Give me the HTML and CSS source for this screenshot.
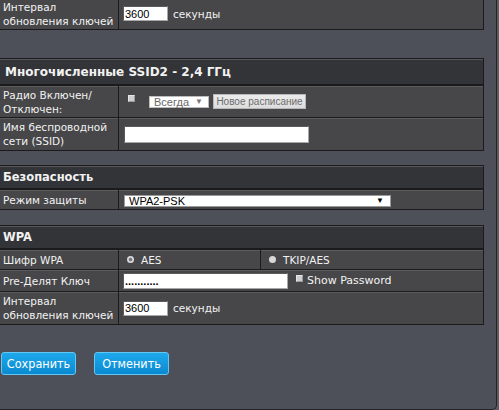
FILE: index.html
```html
<!DOCTYPE html>
<html lang="ru">
<head>
<meta charset="utf-8">
<title>SSID2</title>
<link rel="stylesheet" href="styles.css">
</head>
<body>
<div class="page">
  <table class="tbl t1">
    <tr class="r2">
      <td class="lbl">Интервал<br>обновления ключей</td>
      <td class="val"><input class="txt short" value="3600"><span class="unit">секунды</span></td>
    </tr>
  </table>

  <table class="tbl t2">
    <tr><th colspan="2" class="hd big">Многочисленные SSID2 - 2,4 ГГц</th></tr>
    <tr class="r2">
      <td class="lbl">Радио Включен/<br>Отключен:</td>
      <td class="val"><span class="cb"></span><span class="sel sched">Всегда<span class="arr">▼</span></span><span class="gbtn">Новое расписание</span></td>
    </tr>
    <tr class="r2b">
      <td class="lbl">Имя беспроводной<br>сети (SSID)</td>
      <td class="val"><input class="txt ssid" value=""></td>
    </tr>
  </table>

  <table class="tbl t3">
    <tr><th colspan="2" class="hd">Безопасность</th></tr>
    <tr class="r1">
      <td class="lbl">Режим защиты</td>
      <td class="val"><span class="sel mode">WPA2-PSK<span class="arr">▼</span></span></td>
    </tr>
  </table>

  <table class="tbl t4">
    <tr><th colspan="3" class="hd">WPA</th></tr>
    <tr class="r1">
      <td class="lbl">Шифр WPA</td>
      <td class="val aes"><span class="rd on"></span><span class="opt">AES</span></td>
      <td class="val"><span class="rd"></span><span class="opt">TKIP/AES</span></td>
    </tr>
    <tr class="r1b">
      <td class="lbl">Pre-Делят Ключ</td>
      <td class="val" colspan="2"><input class="txt pw" value="..........."><span class="cb sp"></span><span class="show">Show Password</span></td>
    </tr>
    <tr class="r2b">
      <td class="lbl">Интервал<br>обновления ключей</td>
      <td class="val" colspan="2"><input class="txt short" value="3600"><span class="unit">секунды</span></td>
    </tr>
  </table>

  <div class="actions">
    <button class="bbtn">Сохранить</button>
    <button class="bbtn">Отменить</button>
  </div>
</div>
</body>
</html>
```

FILE: styles.css
```css
html, body {
  margin: 0;
  padding: 0;
}
body {
  background: #5a5d65;
  font-family: "DejaVu Sans", "Noto Sans", sans-serif;
  font-size: 10.5px;
  color: #f2f2f2;
  width: 499px;
  height: 410px;
  overflow: hidden;
}
.page {
  width: 496px;
  height: 409px;
  background: #4d5059;
  border-right: 1px solid #222327;
  border-bottom: 1px solid #222327;
  border-bottom-right-radius: 5px;
  display: flow-root;
}
.tbl {
  border-collapse: collapse;
  width: 485px;
  margin-left: -1px;
}
.tbl td, .tbl th {
  border: 1px solid #1b1b1d;
  padding: 0 0 0 3px;
  background: #474749;
  box-shadow: inset 0 1px 0 #5c5c5e;
  text-align: left;
  vertical-align: middle;
  line-height: 14px;
  white-space: nowrap;
}
.tbl .lbl {
  width: 115px;
}
.tbl .hd {
  background: #333438;
  font-weight: bold;
  font-size: 11.5px;
  height: 22px;
  padding-left: 3px;
  box-shadow: inset 0 1px 0 #56575b;
  border-bottom-width: 2px;
}
.tbl .hd.big {
  font-size: 12px;
  height: 25px;
  padding-left: 5px;
}
.t1 { margin-top: -3px; }
.t2 { margin-top: 28px; }
.t3 { margin-top: 14px; }
.t4 { margin-top: 15px; }

.r2 td { height: 31px; }
.r2b td { height: 32px; }
.r1 td { height: 19px; }
.r1b td { height: 21px; }

.val { padding-left: 4px; }

.txt {
  box-sizing: border-box;
  background: #fff;
  border: 1px solid #a8a8a8;
  border-top-color: #5a5a5a;
  border-left-color: #5a5a5a;
  font-family: "Liberation Sans", Arial, sans-serif;
  font-size: 11px;
  color: #000;
  padding: 0 1px;
  margin: 0;
  vertical-align: middle;
  outline: none;
}
.short {
  width: 45px;
  height: 15px;
  margin-left: 1px;
}
.unit {
  margin-left: 5px;
  vertical-align: middle;
}
.ssid {
  width: 185px;
  height: 17px;
  margin-left: 2px;
}
.pw {
  width: 165px;
  height: 16px;
  margin-left: 1px;
  font-weight: bold;
  margin-top: 1px;
}

.cb {
  display: inline-block;
  width: 7px;
  height: 7px;
  box-sizing: border-box;
  background: #cfcfd1;
  border: 1px solid #e4e4e6;
  border-right-color: #9a9a9c;
  border-bottom-color: #9a9a9c;
  vertical-align: middle;
  margin-left: 6px;
  margin-top: -6px;
}
.cb.sp {
  margin-left: 8px;
  margin-top: -4px;
}
.show {
  margin-left: 4px;
  vertical-align: middle;
  font-size: 11px;
}

.sel {
  display: inline-flex;
  align-items: center;
  justify-content: space-between;
  box-sizing: border-box;
  background: #fff;
  font-family: "Liberation Sans", Arial, sans-serif;
  font-size: 11px;
  line-height: 12px;
  vertical-align: middle;
}
.sel .arr {
  font-size: 8px;
}
.sched {
  width: 60px;
  height: 12px;
  margin-left: 14px;
  padding: 0 5px 0 4px;
  color: #6a6a6a;
  border: 1px solid #bcbcbc;
}
.sched .arr { color: #777; }
.mode {
  width: 267px;
  height: 12px;
  margin-left: 2px;
  padding: 0 6px 0 4px;
  color: #000;
  border: 1px solid #9a9a9a;
}
.mode .arr { color: #000; }

.gbtn {
  display: inline-block;
  box-sizing: border-box;
  width: 93px;
  height: 15px;
  margin-left: 4px;
  background: linear-gradient(#ececec, #dcdcdc);
  border: 1px solid #b8b8b8;
  color: #6d6d6d;
  font-family: "Liberation Sans", Arial, sans-serif;
  font-size: 10px;
  line-height: 13px;
  text-align: center;
  vertical-align: middle;
}

.aes { width: 138px; }
.rd {
  display: inline-block;
  width: 7px;
  height: 7px;
  border-radius: 50%;
  background: #d8d8da;
  vertical-align: middle;
  margin-left: 5px;
  margin-top: -2px;
  box-sizing: border-box;
}
.rd.on {
  background: radial-gradient(circle, #7a7a7c 0 1.6px, #d8d8da 2.2px);
}
.opt {
  margin-left: 7px;
  vertical-align: middle;
}

.actions {
  display: flex;
  gap: 18px;
  margin-top: 27px;
  padding-left: 1px;
}
.bbtn {
  box-sizing: border-box;
  width: 75px;
  height: 23px;
  padding: 0;
  border: 1px solid #63c6f3;
  border-radius: 3px;
  background: linear-gradient(#1fa8ec, #0a8ad0);
  color: #fff;
  font-family: "DejaVu Sans", sans-serif;
  font-stretch: condensed;
  font-size: 12.5px;
  line-height: 20px;
  text-align: center;
}
```
